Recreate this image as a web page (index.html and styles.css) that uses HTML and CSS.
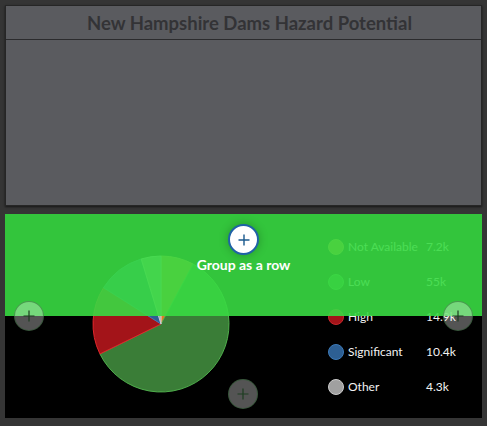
FILE: index.html
```html
<!DOCTYPE html>
<html lang="en">
<head>
    <meta charset="UTF-8" />
    <meta name="viewport" content="width=device-width, initial-scale=1.0"/>
    <title>New Hampshire Dams Hazard Potential</title>
    <link rel="stylesheet" href="styles.css">
</head>
<body>
<div class="panel panel-top">
    <div class="panel-header">
        <h2>New Hampshire Dams Hazard Potential</h2>
    </div>
</div>

<div class="panel panel-chart">
    <div class="pie">
        <svg width="140" height="140" viewBox="0 0 140 140">
            <path class="slice-na" d="M70 70 L70 2 A68 68 0 0 1 102.14 10.07 Z"/>
            <path class="slice-low" d="M70 70 L102.14 10.07 A68 68 0 1 1 8.94 99.91 Z"/>
            <path class="slice-high" d="M70 70 L8.94 99.91 A68 68 0 0 1 12.52 33.66 Z"/>
            <path class="slice-sig" d="M70 70 L12.52 33.66 A68 68 0 0 1 50.23 4.94 Z"/>
            <path class="slice-other" d="M70 70 L50.23 4.94 A68 68 0 0 1 70 2 Z"/>
        </svg>
    </div>

    <ul class="legend">
        <li><span class="dot dot-na"></span><span class="name">Not Available</span><span class="value">7.2k</span></li>
        <li><span class="dot dot-low"></span><span class="name">Low</span><span class="value">55k</span></li>
        <li><span class="dot dot-high"></span><span class="name">High</span><span class="value">14.9k</span></li>
        <li><span class="dot dot-sig"></span><span class="name">Significant</span><span class="value">10.4k</span></li>
        <li><span class="dot dot-other"></span><span class="name">Other</span><span class="value">4.3k</span></li>
    </ul>

    <!-- drop zone shown while dragging a widget -->
    <div class="drop-overlay">
        <div class="drop-active">
            <svg width="12" height="12" viewBox="0 0 12 12"><path d="M6 0.5 V11.5 M0.5 6 H11.5"/></svg>
        </div>
        <div class="drop-label">Group as a row</div>
    </div>

    <div class="drop-target target-left">
        <svg width="12" height="12" viewBox="0 0 12 12"><path d="M6 0.5 V11.5 M0.5 6 H11.5"/></svg>
    </div>
    <div class="drop-target target-right">
        <svg width="12" height="12" viewBox="0 0 12 12"><path d="M6 0.5 V11.5 M0.5 6 H11.5"/></svg>
    </div>
    <div class="drop-target target-bottom">
        <svg width="12" height="12" viewBox="0 0 12 12"><path d="M6 0.5 V11.5 M0.5 6 H11.5"/></svg>
    </div>
</div>
</body>
</html>
```

FILE: styles.css
```css
* {
  box-sizing: border-box;
}

body {
  margin: 0;
  width: 487px;
  height: 426px;
  padding: 5px 5px 0 5px;
  background-color: #353535;
  font-family: Lato, "Noto Sans", sans-serif;
  overflow: hidden;
}

.panel {
  width: 477px;
}

.panel-top {
  height: 201px;
  background-color: #5a5b5f;
  border: 1px solid #262626;
  box-shadow: 0 1px 2px rgba(0, 0, 0, 0.6);
}

.panel-header {
  height: 34px;
  border-bottom: 1px solid #2b2b2d;
  display: flex;
  align-items: center;
  justify-content: center;
  padding-left: 12px;
}

.panel-header h2 {
  margin: 0;
  font-size: 18.5px;
  font-weight: 700;
  color: #333336;
}

.panel-chart {
  position: relative;
  height: 204px;
  margin-top: 8px;
  background-color: #000;
  display: flex;
  align-items: flex-start;
}

.pie {
  margin: 40px 0 0 86px;
  width: 140px;
  height: 140px;
}

.pie svg {
  display: block;
}

.slice-na { fill: #e07a20; stroke: #f09a40; stroke-width: 1; }
.slice-low { fill: #3a7d37; stroke: #4fae4c; stroke-width: 1; }
.slice-high { fill: #a31419; stroke: #e0262b; stroke-width: 1; }
.slice-sig { fill: #2d5f93; stroke: #3d7ab8; stroke-width: 1; }
.slice-other { fill: #a5a5a5; stroke: #d0d0d0; stroke-width: 1; }

.legend {
  list-style: none;
  margin: 0 0 0 97px;
  padding: 15px 0 0 0;
}

.legend li {
  height: 35px;
  display: flex;
  align-items: center;
  color: #f2f2f2;
  font-size: 12px;
}

.dot {
  width: 16px;
  height: 16px;
  border-radius: 50%;
  border: 1px solid;
  margin-right: 4px;
}

.dot-na { background-color: #e07a20; border-color: #f09a40; }
.dot-low { background-color: #3a7d37; border-color: #4fae4c; }
.dot-high { background-color: #a31419; border-color: #c8282c; }
.dot-sig { background-color: #2d5f93; border-color: #3d7ab8; }
.dot-other { background-color: #a0a0a0; border-color: #cccccc; }

.name {
  width: 78px;
}

.drop-overlay {
  position: absolute;
  top: 0;
  left: 0;
  right: 0;
  height: 102px;
  background-color: rgba(57, 218, 66, 0.9);
  display: flex;
  flex-direction: column;
  align-items: center;
  padding-top: 10px;
}

.drop-active {
  width: 31px;
  height: 31px;
  border-radius: 50%;
  background-color: #fff;
  border: 2px solid #1f62a6;
  box-shadow: 0 0 10px rgba(0, 0, 0, 0.25);
  display: flex;
  align-items: center;
  justify-content: center;
}

.drop-active path {
  stroke: #1b5a8e;
  stroke-width: 1.4;
  fill: none;
}

.drop-label {
  margin-top: 1px;
  color: #fff;
  font-size: 14px;
  font-weight: 700;
  line-height: 17px;
}

.drop-target {
  position: absolute;
  width: 30px;
  height: 30px;
  border-radius: 50%;
  background-color: rgba(255, 255, 255, 0.33);
  border: 1px solid rgba(30, 90, 35, 0.5);
  display: flex;
  align-items: center;
  justify-content: center;
}

.drop-target path {
  stroke: #1d3d20;
  stroke-width: 1.2;
  fill: none;
}

.target-left { left: 9px; top: 87px; }
.target-right { left: 438px; top: 87px; }
.target-bottom { left: 223px; top: 165px; }
```
